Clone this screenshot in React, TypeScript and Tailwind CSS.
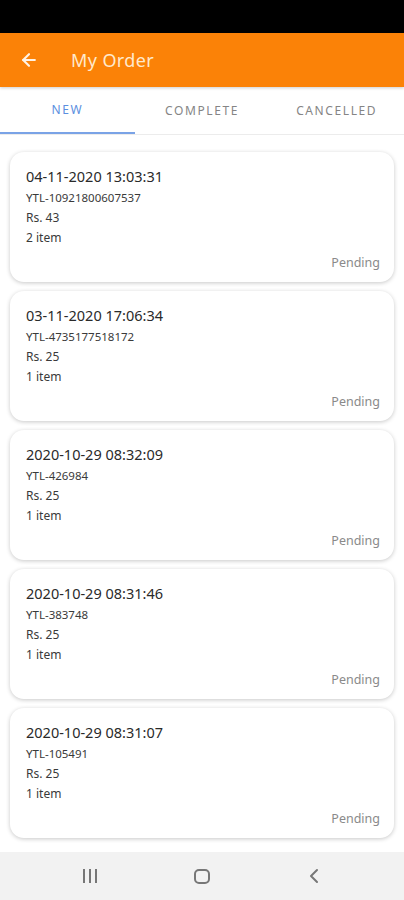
import { ArrowLeft } from "lucide-react";

const orders = [
  { date: "04-11-2020 13:03:31", id: "YTL-10921800607537", amount: "Rs. 43", items: "2 item" },
  { date: "03-11-2020 17:06:34", id: "YTL-4735177518172", amount: "Rs. 25", items: "1 item" },
  { date: "2020-10-29 08:32:09", id: "YTL-426984", amount: "Rs. 25", items: "1 item" },
  { date: "2020-10-29 08:31:46", id: "YTL-383748", amount: "Rs. 25", items: "1 item" },
  { date: "2020-10-29 08:31:07", id: "YTL-105491", amount: "Rs. 25", items: "1 item" },
];

function OrderCard({ date, id, amount, items }: (typeof orders)[number]) {
  return (
    <div className="bg-white rounded-[14px] shadow-[0_1px_4px_rgba(0,0,0,0.22)] h-[130px] px-4 pt-[14px] flex flex-col">
      <div className="text-[14.5px] text-[#2a2a2a] leading-[20px]">{date}</div>
      <div className="text-[11.5px] text-[#3a3a3a] leading-[15px] mt-[4px]">{id}</div>
      <div className="text-[12px] text-[#3a3a3a] leading-[15px] mt-[5px]">{amount}</div>
      <div className="text-[12px] text-[#3a3a3a] leading-[15px] mt-[5px]">{items}</div>
      <div className="text-[12.5px] text-[#8a8a8a] leading-[16px] mt-[10px] text-right mr-[-2px]">
        Pending
      </div>
    </div>
  );
}

export default function App() {
  return (
    <div className="w-[404px] h-[900px] bg-white flex flex-col overflow-hidden font-['Noto_Sans','Open_Sans',sans-serif]">
      <div className="h-[33px] bg-black shrink-0" />

      <div className="h-[54px] bg-[#fb8207] flex items-center shrink-0 shadow-[0_1px_3px_rgba(0,0,0,0.2)] z-10">
        <ArrowLeft className="ml-[19px] text-[#fff3e4]" size={20} strokeWidth={2.6} />
        <span className="ml-[32px] text-[18px] text-[#ffe9cc] tracking-[0.4px]">My Order</span>
      </div>

      <div className="h-[48px] grid grid-cols-3 shrink-0 border-b border-[#ececec]">
        <div className="flex flex-col items-center justify-between">
          <span className="flex-1 flex items-center text-[12px] tracking-[1.5px] text-[#5b8fe0]">NEW</span>
          <div className="h-[2px] w-full bg-[#7aa3e6]" />
        </div>
        <div className="flex items-center justify-center text-[12px] tracking-[1.6px] text-[#858585]">COMPLETE</div>
        <div className="flex items-center justify-center text-[12px] tracking-[1.6px] text-[#858585]">CANCELLED</div>
      </div>

      <div className="flex-1 flex flex-col gap-[9px] px-[10px] pt-[17px] overflow-hidden">
        {orders.map((o) => (
          <OrderCard key={o.id} {...o} />
        ))}
      </div>

      <div className="h-[48px] bg-[#f2f2f2] shrink-0 flex items-center justify-center gap-[96px]">
        <div className="flex gap-[4px] w-[16px] justify-center">
          <div className="w-[2px] h-[14px] bg-[#777]" />
          <div className="w-[2px] h-[14px] bg-[#777]" />
          <div className="w-[2px] h-[14px] bg-[#777]" />
        </div>
        <div className="w-[16px] h-[15px] border-2 border-[#777] rounded-[5px]" />
        <svg width="16" height="16" viewBox="0 0 16 16">
          <path d="M11 2 L5 8 L11 14" fill="none" stroke="#777" strokeWidth="2" strokeLinecap="round" strokeLinejoin="round" />
        </svg>
      </div>
    </div>
  );
}
